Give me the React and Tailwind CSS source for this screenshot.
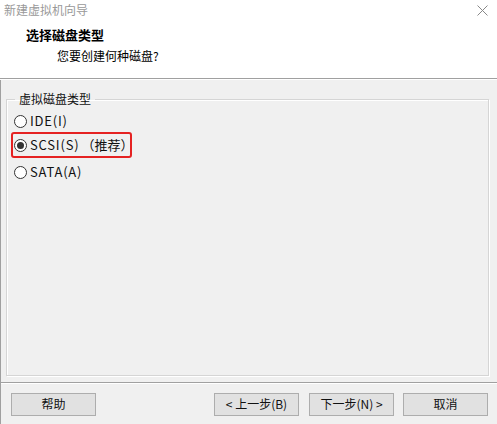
import { useState } from "react";

const font = { fontFamily: '"Noto Sans CJK SC", "Noto Sans", sans-serif' };

const Radio = ({ checked, label, onClick }) => (
  <label onClick={onClick} className="flex items-center gap-[3px] h-[20px] cursor-default whitespace-nowrap">
    <span className="w-[13px] h-[13px] shrink-0 rounded-full border border-[#333] bg-white flex items-center justify-center">
      {checked && <span className="w-[7px] h-[7px] rounded-full bg-[#333]"></span>}
    </span>
    <span className="text-[13px] tracking-[0.8px] text-[#111]">{label}</span>
  </label>
);

const App = () => {
  const [disk, setDisk] = useState("scsi");

  return (
    <div className="w-[497px] h-[424px] bg-white flex flex-col overflow-hidden" style={font}>
      {/* title bar */}
      <div className="h-[20px] flex items-center justify-between pl-[4px] pr-[7px]">
        <span className="text-[12px] text-[#999]">新建虚拟机向导</span>
        <svg width="11" height="11" viewBox="0 0 11 11" className="mr-[2px]">
          <path d="M0.5 0.5 L10.5 10.5 M10.5 0.5 L0.5 10.5" stroke="#888" strokeWidth="1" />
        </svg>
      </div>

      {/* header */}
      <div className="h-[58px] bg-white">
        <div className="pl-[26px] pt-[6px] text-[13px] font-bold text-black leading-[18px]">选择磁盘类型</div>
        <div className="pl-[57px] pt-[4px] text-[12px] text-black leading-[16px]">您要创建何种磁盘?</div>
      </div>
      <div className="border-t border-[#a0a0a0] border-b border-b-white"></div>

      {/* content */}
      <div className="flex-1 bg-[#f0f0f0] border-l border-[#a0a0a0] flex flex-col">
        <div className="flex-1 pl-[5px] pr-[8px] pt-[10px]">
          <fieldset className="h-[286px] border border-[#d5d5d5] shadow-[inset_1px_1px_0_#fff,1px_1px_0_#fff] pl-[6px] pr-[4px]">
            <legend className="text-[12px] text-[#111] px-[4px] ml-[2px]">虚拟磁盘类型</legend>
            <div className="flex flex-col pt-[3px]">
              <div className="pl-[1px]">
                <Radio checked={disk === "ide"} label="IDE(I)" onClick={() => setDisk("ide")} />
              </div>
              <div className="mt-[1px] w-[121px] h-[26px] -ml-[2px] border-2 border-[#e52222] rounded-[3px] flex items-center pl-[1px]">
                <Radio
                  checked={disk === "scsi"}
                  label={<>SCSI(S)<span className="ml-[2px] tracking-normal">（推荐）</span></>}
                  onClick={() => setDisk("scsi")}
                />
              </div>
              <div className="mt-[4px] pl-[1px]">
                <Radio checked={disk === "sata"} label="SATA(A)" onClick={() => setDisk("sata")} />
              </div>
            </div>
          </fieldset>
        </div>

        <div className="border-t border-[#a0a0a0] border-b border-b-white"></div>
        <div className="h-[40px] flex items-center pl-[10px] pr-[9px]">
          <button className="w-[85px] h-[23px] bg-[#e1e1e1] border border-[#adadad] text-[12px] text-[#111]">帮助</button>
          <div className="flex-1"></div>
          <button className="w-[85px] h-[23px] bg-[#e1e1e1] border border-[#adadad] text-[12px] text-[#111]">&lt; 上一步(B)</button>
          <button className="ml-[10px] w-[85px] h-[23px] bg-[#e1e1e1] border border-[#adadad] text-[12px] text-[#111]">下一步(N) &gt;</button>
          <button className="ml-[9px] w-[85px] h-[23px] bg-[#e1e1e1] border border-[#adadad] text-[12px] text-[#111]">取消</button>
        </div>
      </div>
    </div>
  );
};

export default App;
